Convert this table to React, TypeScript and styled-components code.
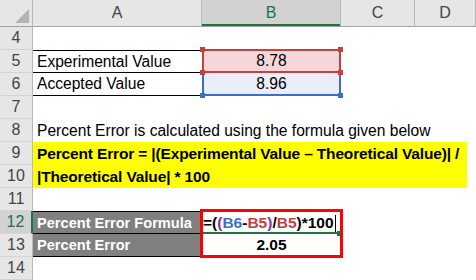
import React from "react";
import styled, { createGlobalStyle, css } from "styled-components";

const GlobalStyle = createGlobalStyle`
  body {
    margin: 0;
    background: #fff;
    font-family: "Liberation Sans", Arial, sans-serif;
  }
`;

const COLS = "33px 169px 139px 74px 1fr";
const GREEN = "#217346";
const REF_RED = "#c4413f";
const REF_BLUE = "#3e6fc6";

const Sheet = styled("div")`
  width: 476px;
  height: 280px;
  overflow: hidden;
  background: #fff;
  color: #000;
`;

const HeaderRow = styled("div")`
  display: grid;
  grid-template-columns: ${COLS};
  height: 27px;
  box-sizing: border-box;
  background: #e6e6e6;
  border-bottom: 1px solid #a3a3a3;
`;

const Corner = styled("div")`
  display: flex;
  align-items: flex-end;
  justify-content: flex-end;
  padding: 0 3px 3px 0;
  border-right: 1px solid #b8b8b8;
`;

const Triangle = styled("div")`
  width: 0;
  height: 0;
  border-left: 14px solid transparent;
  border-bottom: 14px solid #b3b3b3;
`;

const ColHead = styled("div")<{ $active?: boolean }>`
  display: flex;
  align-items: center;
  justify-content: center;
  font-size: 16px;
  color: #444;
  border-right: 1px solid #b8b8b8;
  ${(p) =>
    p.$active &&
    css`
      background: #d2d2d2;
      color: ${GREEN};
      box-shadow: inset 0 -2px 0 ${GREEN};
    `}
`;

const Row = styled("div")`
  display: grid;
  grid-template-columns: ${COLS};
  height: 23px;
`;

const RowHead = styled("div")<{ $active?: boolean }>`
  display: flex;
  align-items: center;
  justify-content: center;
  box-sizing: border-box;
  background: #e6e6e6;
  border-right: 1px solid #b8b8b8;
  border-bottom: 1px solid #d4d4d4;
  font-size: 16px;
  color: #444;
  ${(p) =>
    p.$active &&
    css`
      background: #d2d2d2;
      color: ${GREEN};
      border-right: 2px solid ${GREEN};
    `}
`;

const Cell = styled("div")<{
  $span?: number;
  $fill?: string;
  $bold?: boolean;
  $light?: boolean;
  $top?: boolean;
  $bottom?: boolean;
  $right?: number;
}>`
  grid-column: span ${(p) => p.$span || 1};
  display: flex;
  align-items: center;
  box-sizing: border-box;
  padding: 0 4px;
  font-size: ${(p) => (p.$bold ? 14.6 : 15.6)}px;
  white-space: nowrap;
  background: ${(p) => p.$fill || "transparent"};
  color: ${(p) => (p.$light ? "#fff" : "#000")};
  font-weight: ${(p) => (p.$bold ? 700 : 400)};
  border-top: ${(p) => (p.$top ? "1px solid #000" : "none")};
  border-bottom: ${(p) => (p.$bottom ? "1px solid #000" : "none")};
  margin-right: ${(p) => p.$right || 0}px;
`;

const YellowText = styled("span")`
  font-size: 15.5px;
  letter-spacing: -0.15px;
`;

const RefCell = styled("div")<{ $fill: string; $line: string; $open?: boolean }>`
  position: relative;
  display: flex;
  align-items: center;
  justify-content: center;
  box-sizing: border-box;
  font-size: 15.6px;
  background: ${(p) => p.$fill};
  border: 2px solid ${(p) => p.$line};
  border-top: ${(p) => (p.$open ? "none" : `2px solid ${p.$line}`)};
  margin-top: ${(p) => (p.$open ? 0 : -1)}px;
`;

const Handle = styled("span")<{ $color: string; $x: "l" | "r"; $y: "t" | "b" }>`
  position: absolute;
  width: 5px;
  height: 5px;
  background: ${(p) => p.$color};
  ${(p) => (p.$x === "l" ? "left: -4px;" : "right: -4px;")}
  ${(p) => (p.$y === "t" ? "top: -4px;" : "bottom: -4px;")}
  z-index: 2;
`;

const OutlinedCell = styled("div")<{ $part: "top" | "bottom" }>`
  position: relative;
  display: flex;
  align-items: center;
  box-sizing: border-box;
  margin: 0 -2px;
  font-size: 15.5px;
  font-weight: 700;
  white-space: nowrap;
  border: 3px solid #ff0000;
  ${(p) =>
    p.$part === "top"
      ? css`
          border-bottom: none;
          margin-top: -2px;
          padding-left: 0;
          box-shadow: inset 0 -2px 0 ${GREEN};
        `
      : css`
          border-top: none;
          justify-content: center;
          margin-bottom: -1px;
        `}
`;

const FillHandle = styled("span")`
  position: absolute;
  right: -1px;
  bottom: -2px;
  width: 4px;
  height: 5px;
  background: ${GREEN};
`;

const Token = styled("span")<{ $color: string }>`
  color: ${(p) => p.$color};
`;

const Caret = styled("span")`
  display: inline-block;
  width: 1px;
  height: 17px;
  margin-left: 1px;
  background: #000;
`;

const formula: [string, string][] = [
  ["=(", "#000"],
  ["(", "#8b2f9e"],
  ["B6", REF_BLUE],
  ["-", "#000"],
  ["B5", REF_RED],
  [")", "#8b2f9e"],
  ["/", "#000"],
  ["B5", REF_RED],
  [")*100", "#000"]
];

const App: React.FC = function () {
  return (
    <Sheet>
      <GlobalStyle />
      <HeaderRow>
        <Corner>
          <Triangle />
        </Corner>
        <ColHead>A</ColHead>
        <ColHead $active>B</ColHead>
        <ColHead>C</ColHead>
        <ColHead>D</ColHead>
      </HeaderRow>

      <Row>
        <RowHead>4</RowHead>
      </Row>
      <Row>
        <RowHead>5</RowHead>
        <Cell $top $bottom>
          Experimental Value
        </Cell>
        <RefCell $fill="#f4d7d9" $line={REF_RED}>
          8.78
          <Handle $color={REF_RED} $x="l" $y="t" />
          <Handle $color={REF_RED} $x="r" $y="t" />
          <Handle $color={REF_RED} $x="l" $y="b" />
          <Handle $color={REF_RED} $x="r" $y="b" />
        </RefCell>
      </Row>
      <Row>
        <RowHead>6</RowHead>
        <Cell $bottom>Accepted Value</Cell>
        <RefCell $fill="#e8eff9" $line={REF_BLUE} $open>
          8.96
          <Handle $color={REF_BLUE} $x="l" $y="b" />
          <Handle $color={REF_BLUE} $x="r" $y="b" />
        </RefCell>
      </Row>
      <Row>
        <RowHead>7</RowHead>
      </Row>
      <Row>
        <RowHead>8</RowHead>
        <Cell $span={4}>Percent Error is calculated using the formula given below</Cell>
      </Row>
      <Row>
        <RowHead>9</RowHead>
        <Cell $span={4} $fill="#ffff00" $bold $right={9}>
          <YellowText>Percent Error = |(Experimental Value – Theoretical Value)| /</YellowText>
        </Cell>
      </Row>
      <Row>
        <RowHead>10</RowHead>
        <Cell $span={4} $fill="#ffff00" $bold $right={9}>
          <YellowText>|Theoretical Value| * 100</YellowText>
        </Cell>
      </Row>
      <Row>
        <RowHead>11</RowHead>
      </Row>
      <Row>
        <RowHead $active>12</RowHead>
        <Cell $fill="#808080" $bold $light $top $bottom>
          Percent Error Formula
        </Cell>
        <OutlinedCell $part="top">
          {formula.map(([text, color], i) => (
            <Token key={i} $color={color}>
              {text}
            </Token>
          ))}
          <Caret />
          <FillHandle />
        </OutlinedCell>
      </Row>
      <Row>
        <RowHead>13</RowHead>
        <Cell $fill="#808080" $bold $light $bottom>
          Percent Error
        </Cell>
        <OutlinedCell $part="bottom">2.05</OutlinedCell>
      </Row>
      <Row>
        <RowHead>14</RowHead>
      </Row>
    </Sheet>
  );
};

export default App;
